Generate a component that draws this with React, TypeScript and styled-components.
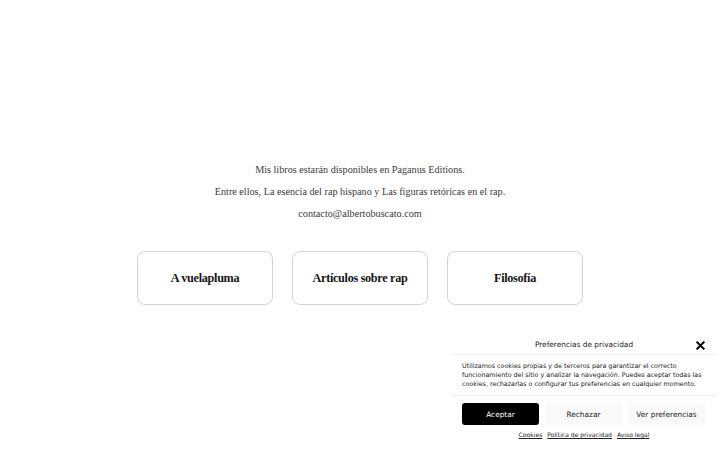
import React from "react";
import styled, { createGlobalStyle } from "styled-components";

const Global = createGlobalStyle`
  html, body { margin: 0; padding: 0; background: #ffffff; }
  body { font-family: "Liberation Serif", serif; }
  * { box-sizing: border-box; }
`;

const Page = styled.main`
  width: 720px;
  min-height: 450px;
  padding-top: 159px;
  display: flex;
  flex-direction: column;
  align-items: center;
`;

const Intro = styled.section`
  display: flex;
  flex-direction: column;
  align-items: center;
`;

const Line = styled.p`
  margin: 0;
  font-family: "Liberation Serif", serif;
  font-size: 10.2px;
  line-height: 22px;
  color: #3a3a3a;
  text-align: center;
`;

const Cards = styled.nav`
  margin-top: 26px;
  display: grid;
  grid-template-columns: repeat(3, 136px);
  gap: 19px;
`;

const Card = styled.a`
  height: 54px;
  border: 1px solid #d4d4d4;
  border-radius: 8px;
  display: flex;
  align-items: center;
  justify-content: center;
  font-family: "Liberation Serif", serif;
  font-weight: 700;
  font-size: 12.2px;
  letter-spacing: -0.3px;
  color: #151515;
  text-decoration: none;
`;

const Banner = styled.aside`
  position: fixed;
  right: 4px;
  bottom: 0;
  width: 264px;
  background: #ffffff;
  font-family: "DejaVu Sans", sans-serif;
  color: #222;
  padding-bottom: 10px;
`;

const Header = styled.header`
  position: relative;
  height: 20px;
  display: flex;
  align-items: center;
  justify-content: center;
  border-bottom: 1px solid #f1f1f1;
`;

const Title = styled.span`
  font-size: 7.4px;
  color: #222;
`;

const Close = styled.button`
  position: absolute;
  right: 11px;
  top: 5px;
  width: 10px;
  height: 10px;
  padding: 0;
  border: 0;
  background: none;
  display: flex;
  align-items: center;
  justify-content: center;
`;

const Body = styled.p`
  margin: 0;
  padding: 6px 10px 7px;
  font-size: 6.35px;
  line-height: 9px;
  color: #222;
  border-bottom: 1px solid #f1f1f1;
`;

const Buttons = styled.div`
  display: grid;
  grid-template-columns: repeat(3, 77px);
  gap: 6px;
  padding: 7px 10px 0;
`;

const Btn = styled.button<{ $primary?: boolean }>`
  height: 22px;
  border: 0;
  border-radius: 3px;
  background: ${(p) => (p.$primary ? "#000000" : "#f9f9f9")};
  color: ${(p) => (p.$primary ? "#ffffff" : "#222222")};
  font-family: "DejaVu Sans", sans-serif;
  font-size: 7.4px;
  padding: 0;
`;

const Links = styled.div`
  display: flex;
  justify-content: center;
  gap: 5px;
  margin-top: 5px;
  line-height: 10px;
`;

const LinkItem = styled.a`
  font-size: 6.05px;
  color: #222;
  text-decoration: underline;
`;

export default function App() {
  return (
    <>
      <Global />
      <Page>
        <Intro>
          <Line>Mis libros estarán disponibles en Paganus Editions.</Line>
          <Line>Entre ellos, La esencia del rap hispano y Las figuras retóricas en el rap.</Line>
          <Line>contacto@albertobuscato.com</Line>
        </Intro>
        <Cards>
          <Card href="#">A vuelapluma</Card>
          <Card href="#">Artículos sobre rap</Card>
          <Card href="#">Filosofía</Card>
        </Cards>
      </Page>
      <Banner>
        <Header>
          <Title>Preferencias de privacidad</Title>
          <Close aria-label="Cerrar">
            <svg width="9" height="9" viewBox="0 0 10 10">
              <path d="M1.5 1.5 L8.5 8.5 M8.5 1.5 L1.5 8.5" stroke="#000" strokeWidth="2.2" strokeLinecap="square" />
            </svg>
          </Close>
        </Header>
        <Body>
          Utilizamos cookies propias y de terceros para garantizar el correcto funcionamiento del sitio y analizar la navegación. Puedes aceptar todas las cookies, rechazarlas o configurar tus preferencias en cualquier momento.
        </Body>
        <Buttons>
          <Btn $primary>Aceptar</Btn>
          <Btn>Rechazar</Btn>
          <Btn>Ver preferencias</Btn>
        </Buttons>
        <Links>
          <LinkItem href="#">Cookies</LinkItem>
          <LinkItem href="#">Política de privacidad</LinkItem>
          <LinkItem href="#">Aviso legal</LinkItem>
        </Links>
      </Banner>
    </>
  );
}
